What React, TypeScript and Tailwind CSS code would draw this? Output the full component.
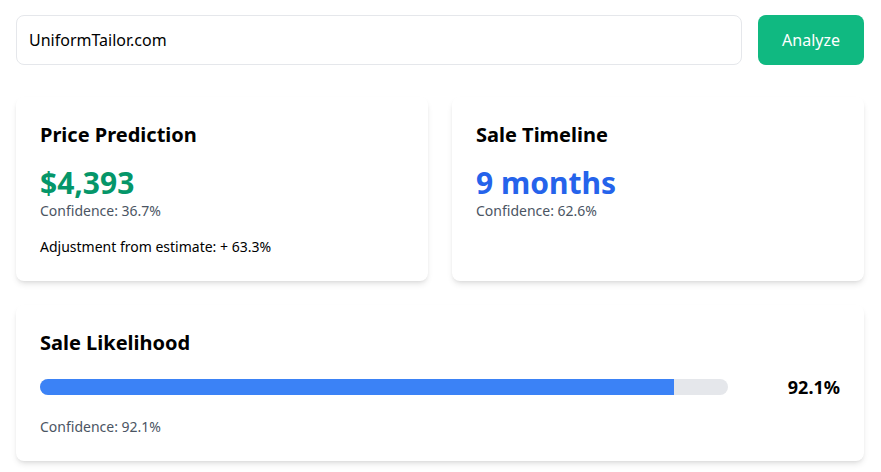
import React, { useState } from 'react';

const font = { fontFamily: '"Noto Sans", "Open Sans", sans-serif' };

export default function App() {
  const [domain, setDomain] = useState('UniformTailor.com');
  const likelihood = 92.1;

  return (
    <div className="min-h-screen bg-white pl-4 pr-[17px] pt-[15px] pb-4 text-black" style={font}>
      {/* Search bar */}
      <div className="flex gap-4 mb-8">
        <input
          value={domain}
          onChange={(e) => setDomain(e.target.value)}
          className="flex-1 border border-[#e5e7eb] rounded-lg px-3 py-3 text-base leading-6 outline-none"
        />
        <button className="bg-[#10b981] text-white rounded-lg px-6 text-base">
          Analyze
        </button>
      </div>

      {/* Prediction cards */}
      <div className="grid grid-cols-2 gap-6 mb-6">
        <div className="bg-white rounded-lg shadow-md p-6">
          <h2 className="text-xl leading-7 font-bold mb-4">Price Prediction</h2>
          <div className="text-3xl leading-9 font-bold text-[#059669]">$4,393</div>
          <div className="text-sm leading-5 text-[#4b5563]">Confidence: 36.7%</div>
          <div className="text-sm leading-5 mt-4">Adjustment from estimate: + 63.3%</div>
        </div>
        <div className="bg-white rounded-lg shadow-md p-6">
          <h2 className="text-xl leading-7 font-bold mb-4">Sale Timeline</h2>
          <div className="text-3xl leading-9 font-bold text-[#2563eb]">9 months</div>
          <div className="text-sm leading-5 text-[#4b5563]">Confidence: 62.6%</div>
        </div>
      </div>

      {/* Likelihood */}
      <div className="bg-white rounded-lg shadow-md p-6">
        <h2 className="text-xl leading-7 font-bold mb-4">Sale Likelihood</h2>
        <div className="flex items-center gap-4">
          <div className="flex-1 h-4 bg-[#e5e7eb] rounded-full overflow-hidden">
            <div className="h-full bg-[#3b82f6]" style={{ width: `${likelihood}%` }} />
          </div>
          <div className="w-24 text-right text-lg leading-7 font-bold">{likelihood}%</div>
        </div>
        <div className="text-sm leading-5 text-[#4b5563] mt-4">Confidence: 92.1%</div>
      </div>
    </div>
  );
}
